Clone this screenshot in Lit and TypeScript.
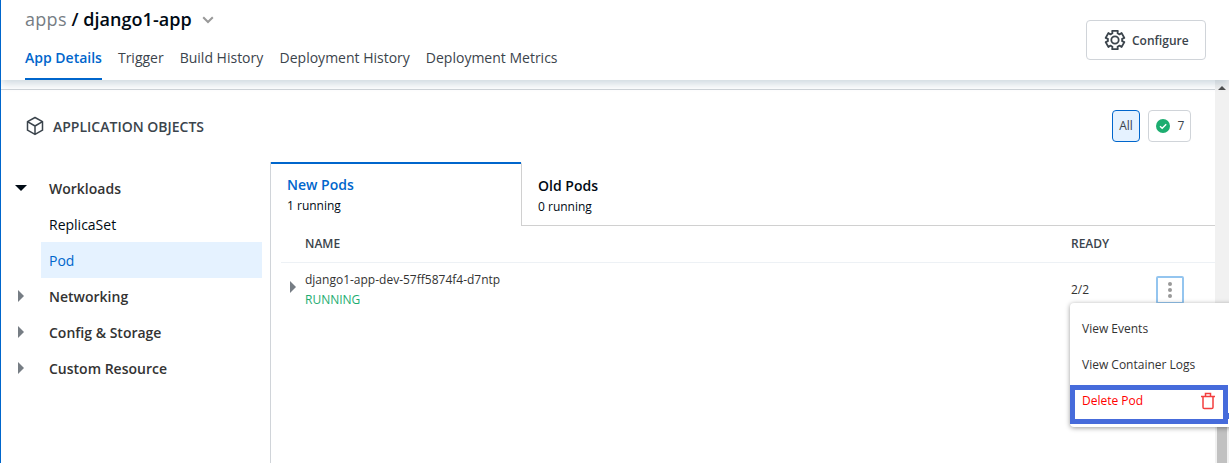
import { LitElement, html, css, svg } from "lit";
import { customElement } from "lit/decorators.js";
import { classMap } from "lit/directives/class-map.js";

const tabs = ["App Details", "Trigger", "Build History", "Deployment History", "Deployment Metrics"];
const groups = ["Networking", "Config & Storage", "Custom Resource"];

// Gear outline: six teeth around a round body, centred on (12, 12).
const gearPath = (() => {
  const pt = (r: number, deg: number) => {
    const a = (deg * Math.PI) / 180;
    return `${(12 + r * Math.cos(a)).toFixed(2)} ${(12 + r * Math.sin(a)).toFixed(2)}`;
  };
  let d = "";
  for (let i = 0; i < 6; i++) {
    const c = i * 60 - 90;
    d += `${i ? "L" : "M"}${pt(7.2, c - 21)}L${pt(9.6, c - 17)}L${pt(9.6, c + 17)}L${pt(7.2, c + 21)}`;
  }
  return d + "Z";
})();

@customElement("app-root")
export class AppRoot extends LitElement {
  static styles = css`
    :host {
      display: flex;
      flex-direction: column;
      position: relative;
      box-sizing: border-box;
      width: 1229px;
      height: 463px;
      overflow: hidden;
      border-left: 1px solid #0066cc;
      background: #fff;
      color: #000a14;
      font-family: "Open Sans", "Noto Sans", sans-serif;
      font-size: 14px;
      line-height: 20px;
    }
    * { box-sizing: border-box; }
    svg { display: block; flex: none; }
    .header {
      display: flex;
      justify-content: space-between;
      flex: none;
      height: 80px;
      padding: 0 23px 0 24px;
      background: #fff;
      box-shadow: 0 4px 8px 0 rgba(21, 71, 107, 0.2);
      z-index: 1;
    }
    .crumbs {
      display: flex;
      align-items: center;
      height: 40px;
      padding-bottom: 2px;
      font-size: 18px;
      line-height: 24px;
      font-weight: 600;
      letter-spacing: 0.04px;
      white-space: pre;
    }
    .crumbs .muted { color: #767d84; font-weight: 400; letter-spacing: 0.3px; }
    .crumbs svg { margin: 2px 0 0 9px; }
    .tabs { display: flex; gap: 16px; height: 40px; color: #3b444c; }
    .tab { height: 40px; padding-top: 8px; white-space: nowrap; }
    .tab:nth-child(4) { margin-left: 0.3px; }
    .tab.active { color: #0066cc; font-weight: 600; border-bottom: 2px solid #0066cc; }
    .configure {
      display: flex;
      align-items: center;
      gap: 6px;
      width: 120px;
      height: 40px;
      margin-top: 20px;
      padding-left: 17px;
      border: 1px solid #d0d4d9;
      border-radius: 4px;
      color: #3b444c;
      font-size: 12px;
      font-weight: 600;
    }
    .configure span { padding-top: 2px; }
    .body { display: flex; flex: 1; min-height: 0; }
    .content { display: flex; flex-direction: column; flex: 1; min-width: 0; padding-top: 9px; }
    .title {
      display: flex;
      align-items: center;
      flex: none;
      height: 73px;
      border-top: 1px solid #d0d4d9;
      padding: 0 24px 0 25px;
      color: #3b444c;
      font-weight: 600;
    }
    .title .name { margin-left: 9px; flex: 1; padding-top: 2px; }
    .chip {
      display: flex;
      align-items: center;
      justify-content: center;
      height: 32px;
      border: 1px solid #d0d4d9;
      border-radius: 4px;
      font-size: 12px;
      font-weight: 400;
    }
    .chip.all { width: 28px; margin-right: 8px; background: #e5f2ff; border-color: #0066cc; }
    .chip.healthy { width: 43px; gap: 8px; font-size: 12px; padding-left: 1px; }
    .panes { display: flex; flex: 1; min-height: 0; }
    .tree { width: 269px; flex: none; padding: 8px 8px 0 0; }
    .row { display: flex; align-items: center; height: 36px; font-weight: 600; color: #333; }
    .row svg { width: 12px; margin: 0 22px 0 14px; }
    .row .label { padding-top: 1px; }
    .leaf { height: 36px; margin-left: 40px; padding: 9px 8px 7px; }
    .leaf.active { background: #e5f2ff; color: #0066cc; }
    .pods { display: flex; flex-direction: column; flex: 1; min-width: 0; border-left: 1px solid #d0d4d9; }
    .podtabs { display: flex; flex: none; height: 64px; }
    .podtab { width: 250px; padding: 11px 16px 0; border-top: 2px solid #0066cc; font-weight: 600; }
    .podtab.old { flex: 1; padding-top: 12px; border-top: 2px solid transparent; border-bottom: 1px solid #d0d0d0; border-left: 1px solid #d0d0d0; }
    .podtab.new .heading { color: #0066cc; }
    .count { font-size: 12px; font-weight: 400; line-height: 21px; }
    .thead { display: flex; flex: none; align-items: center; height: 37px; margin-left: 10px; padding-left: 24px; border-bottom: 1px solid #edf1f5; color: #3b444c; font-size: 12px; font-weight: 600; }
    .col-name { width: 766px; flex: none; }
    .pod { display: flex; margin-left: 10px; font-size: 12px; color: #333; }
    .pod .arrow { width: 24px; padding: 18px 0 0 9px; }
    .pod .col-name { padding-top: 7px; }
    .running { color: #1dad70; }
    .ready { width: 85px; padding-top: 17px; }
    .kebab { display: grid; place-items: center; width: 28px; height: 28px; margin-top: 13px; border: 2px solid #94c5ef; border-radius: 2px; }
    .scrollbar { display: flex; flex-direction: column; justify-content: space-between; align-items: center; width: 14px; flex: none; padding-top: 6px; background: #f1f1f1; }
    .thumb { width: 10px; height: 110px; background: #c1c1c1; }
    .menu {
      position: absolute;
      left: 1069px;
      top: 303px;
      width: 166px;
      height: 124px;
      padding-top: 8px;
      border-radius: 4px;
      background: #fff;
      box-shadow: 0 1px 5px rgba(0, 0, 0, 0.4);
      color: #333;
      font-size: 12px;
      z-index: 2;
    }
    .item { display: flex; align-items: center; height: 36px; padding-left: 12px; }
    .item.danger { justify-content: space-between; padding-right: 21px; color: #f00; }
    .highlight { position: absolute; left: 0; top: 82px; width: 158px; height: 39px; border: 5px solid #466bdb; }
    .handle { position: absolute; left: 158px; top: 110px; width: 2px; height: 6px; background: #466bdb; }
  `;

  private right() {
    return html`<svg width="6" height="12" viewBox="0 0 6 12"><path d="M0 0L6 6L0 12Z" fill="#767d84" /></svg>`;
  }

  render() {
    return html`
      <div class="header">
        <div>
          <div class="crumbs"><span class="muted">apps</span><span> / django1-app</span>
            <svg width="14" height="10" viewBox="0 0 14 10"><path d="M2.2 2.2L7 7L11.8 2.2" fill="none" stroke="#999" stroke-width="2" /></svg>
          </div>
          <div class="tabs">
            ${tabs.map((t, i) => html`<div class=${classMap({ tab: true, active: i === 0 })}>${t}</div>`)}
          </div>
        </div>
        <div class="configure">
          <svg width="22" height="22" viewBox="1 1 22 22" fill="none" stroke="#3b444c" stroke-width="1.8" stroke-linejoin="round">
            ${svg`<path d=${gearPath} />`}<circle cx="12" cy="12" r="3.7" />
          </svg>
          <span>Configure</span>
        </div>
      </div>
      <div class="body">
        <div class="content">
          <div class="title">
            <svg width="18" height="20" viewBox="0 0 18 20" fill="none" stroke="#3b444c" stroke-width="1.5" stroke-linejoin="round">
              <path d="M9 1.5L16.5 5.6V14.2L9 18.4L1.5 14.2V5.6ZM1.5 5.6L9 10L16.5 5.6M9 10V18.4" />
            </svg>
            <span class="name">APPLICATION OBJECTS</span>
            <span class="chip all">All</span>
            <span class="chip healthy">
              <svg width="14" height="14" viewBox="0 0 14 14"><circle cx="7" cy="7" r="7" fill="#1dad70" /><path d="M4 7.2L6.2 9.3L10.2 5.2" fill="none" stroke="#fff" stroke-width="1.4" /></svg>
              7
            </span>
          </div>
          <div class="panes">
            <div class="tree">
              <div class="row">
                <svg width="12" height="6" viewBox="0 0 12 6"><path d="M0 0H12L6 6Z" fill="#000a14" /></svg>
                <span class="label">Workloads</span>
              </div>
              <div class="leaf">ReplicaSet</div>
              <div class="leaf active">Pod</div>
              ${groups.map((g) => html`<div class="row">
                <svg width="12" height="12" viewBox="0 0 12 12"><path d="M3 0L9 6L3 12Z" fill="#767d84" /></svg>
                <span class="label">${g}</span></div>`)}
            </div>
            <div class="pods">
              <div class="podtabs">
                <div class="podtab new"><div class="heading">New Pods</div><div class="count">1 running</div></div>
                <div class="podtab old"><div class="heading">Old Pods</div><div class="count">0 running</div></div>
              </div>
              <div class="thead"><span class="col-name">NAME</span><span>READY</span></div>
              <div class="pod">
                <div class="arrow">${this.right()}</div>
                <div class="col-name">
                  <div>django1-app-dev-57ff5874f4-d7ntp</div>
                  <div class="running">RUNNING</div>
                </div>
                <div class="ready">2/2</div>
                <div class="kebab">
                  <svg width="4" height="16" viewBox="0 0 4 16" fill="#999"><circle cx="2" cy="2" r="2" /><circle cx="2" cy="8" r="2" /><circle cx="2" cy="14" r="2" /></svg>
                </div>
              </div>
            </div>
          </div>
        </div>
        <div class="scrollbar">
          <svg width="8" height="4" viewBox="0 0 8 4"><path d="M0 4L4 0L8 4Z" fill="#505050" /></svg>
          <div class="thumb"></div>
        </div>
      </div>
      <div class="menu">
        <div class="item">View Events</div>
        <div class="item">View Container Logs</div>
        <div class="item danger">Delete Pod
          <svg width="14" height="18" viewBox="0 0 14 18" fill="none" stroke="#f33e3e" stroke-width="1.5">
            <path d="M0 4.5H14M4.5 4V1.5H9.5V4M2 5V15.2Q2 16.5 3.3 16.5H10.7Q12 16.5 12 15.2V5" />
          </svg>
        </div>
        <div class="highlight"></div>
        <div class="handle"></div>
      </div>
    `;
  }
}
